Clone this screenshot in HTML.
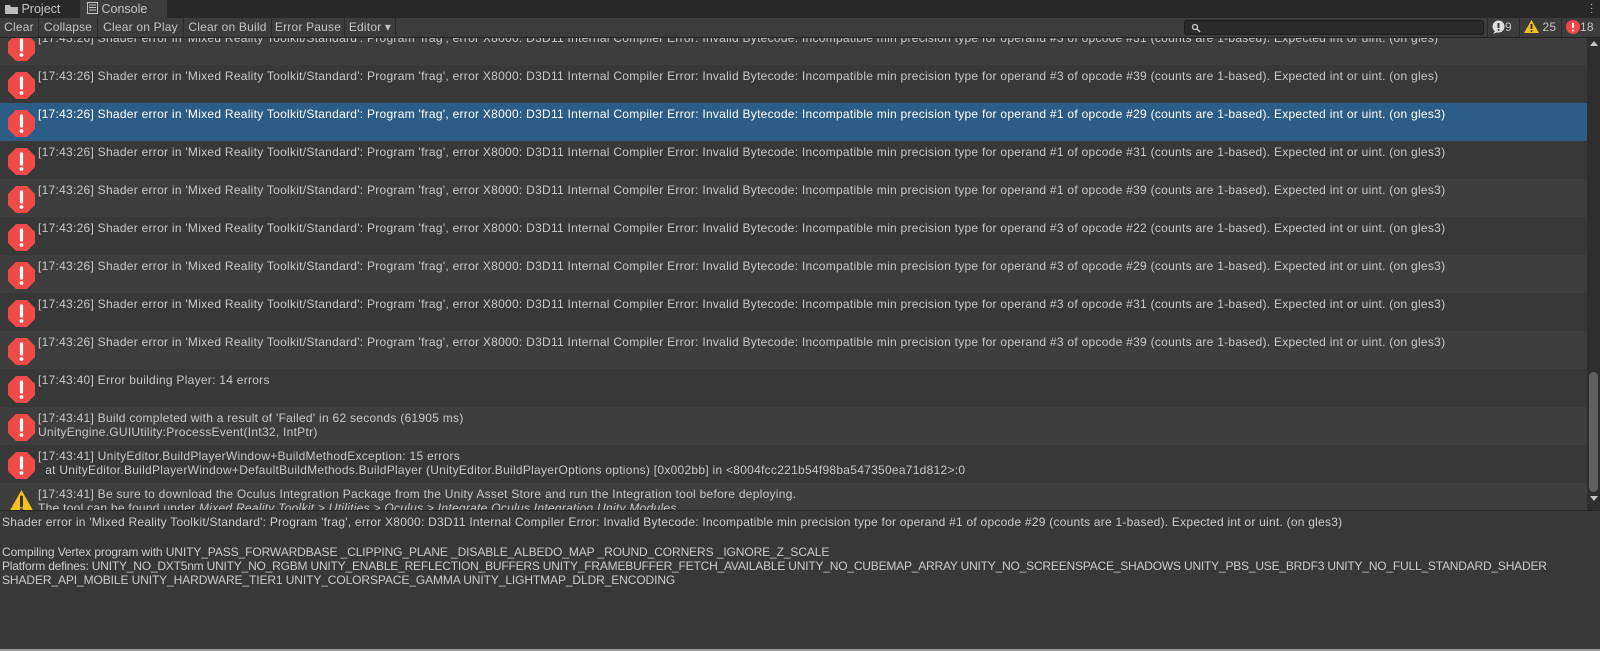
<!DOCTYPE html>
<html><head><meta charset="utf-8"><style>
*{margin:0;padding:0;box-sizing:border-box}
body{width:1600px;height:651px;background:#383838;font-family:"Liberation Sans",sans-serif;font-size:12px;color:#c8c8c8;overflow:hidden;position:relative}
.tabs{position:absolute;left:0;top:0;width:1600px;height:18px;background:#282828}
.tab{position:absolute;top:0;height:18px;line-height:18px;font-size:12.5px;color:#c4c4c4}
.tb{position:absolute;left:0;top:18px;width:1600px;height:20px;background:#3c3c3c;border-bottom:1px solid #232323;z-index:3}
.btn{position:absolute;top:0;height:19px;line-height:19px;font-size:12px;color:#c4c4c4;border-right:1px solid #2a2a2a;text-align:center;letter-spacing:0.2px;white-space:nowrap}
.list{position:absolute;left:0;top:38px;width:1600px;height:472px;overflow:hidden}
.row{position:absolute;left:0;width:1587px;height:38px;background:#3e3e3e}
.row.o{background:#383838}
.row.s{background:#2c5d87}
.row.s .t{color:#fff}
.row .t{position:absolute;left:38px;top:4px;line-height:14px;white-space:pre;font-size:12px;letter-spacing:0.27px;color:#c8c8c8}
.ic{position:absolute;left:8px;top:7px}
.sb{position:absolute;left:1587px;top:38px;width:13px;height:472px;background:#2e2e2e}
.det{position:absolute;left:0;top:510px;width:1600px;height:139px;background:#383838;border-top:1px solid #262626}
.det div{position:absolute;left:2px;white-space:pre;line-height:14px;font-size:12px;color:#cccccc}
</style></head><body>
<svg width="0" height="0" style="position:absolute"><defs>
<g id="err"><path d="M8 0h11l8 8v11l-8 8H8l-8-8V8z" fill="#f04a48"/><path d="M13.5 6v10" stroke="#fff" stroke-width="3.2" stroke-linecap="round"/><circle cx="13.5" cy="21" r="1.9" fill="#fff"/></g>
</defs></svg>
<div class="tabs">
 <div class="tab" style="left:0;width:80px;padding-left:5px"><svg width="13" height="10" style="vertical-align:-1px"><path d="M0 1h5l1 2h7v7H0z" fill="#bdbdbd"/></svg> Project</div>
 <div class="tab" style="left:80px;width:87px;background:#3c3c3c;padding-left:7px"><svg width="11" height="12" style="vertical-align:-1px"><rect x="0.5" y="0.5" width="10" height="11" fill="none" stroke="#c4c4c4"/><path d="M2 3h7M2 5.5h7M2 8h7" stroke="#c4c4c4"/></svg> Console</div>
 <div style="position:absolute;left:1590px;top:3px;width:3px;color:#ccc;font-size:10px;line-height:4px">·<br>·<br>·</div>
</div>
<div class="tb">
 <div class="btn" style="left:0;width:39px">Clear</div>
 <div class="btn" style="left:39px;width:59px">Collapse</div>
 <div class="btn" style="left:98px;width:86px">Clear on Play</div>
 <div class="btn" style="left:184px;width:88px">Clear on Build</div>
 <div class="btn" style="left:272px;width:73px">Error Pause</div>
 <div class="btn" style="left:345px;width:51px">Editor ▾</div>
 <div style="position:absolute;left:1184px;top:2px;width:300px;height:15px;background:#2a2a2a;border:1px solid #1e1e1e;border-radius:3px"><svg width="10" height="10" style="position:absolute;left:6px;top:2px"><circle cx="4" cy="4" r="2.5" fill="none" stroke="#ccc" stroke-width="1.3"/><path d="M6 6l3 3" stroke="#ccc" stroke-width="1.5"/></svg></div>
 <div class="btn" style="left:1487px;width:33px;border-left:1px solid #2a2a2a;text-align:left;padding-left:4px"><svg width="13" height="14" style="vertical-align:-3px"><path d="M6.5 0.5a6 6 0 1 0 0.1 0zM3 11l-2 3 5-2z" fill="#e0e0e0"/><path d="M6.5 3v5" stroke="#333" stroke-width="2"/><circle cx="6.5" cy="10" r="1" fill="#333"/></svg>9</div>
 <div class="btn" style="left:1520px;width:42px;text-align:left;padding-left:4px"><svg width="15" height="13" style="vertical-align:-2px"><path d="M7.5 0L15 13H0z" fill="#f0c020"/><path d="M7.5 4v5" stroke="#333" stroke-width="2"/><circle cx="7.5" cy="11" r="1" fill="#333"/></svg> 25</div>
 <div class="btn" style="left:1562px;width:38px;text-align:left;padding-left:4px;border-right:0"><svg width="14" height="14" style="vertical-align:-3px"><circle cx="7" cy="7" r="7" fill="#f04848"/><path d="M7 3v5" stroke="#fff" stroke-width="2"/><circle cx="7" cy="10.5" r="1" fill="#fff"/></svg>18</div>
</div>
<div class="list">
<div class="row" style="top:-11px"><svg class="ic" width="27" height="27"><use href="#err"/></svg><div class="t">[17:43:26] Shader error in 'Mixed Reality Toolkit/Standard': Program 'frag', error X8000: D3D11 Internal Compiler Error: Invalid Bytecode: Incompatible min precision type for operand #3 of opcode #31 (counts are 1-based). Expected int or uint. (on gles)</div></div>
<div class="row o" style="top:27px"><svg class="ic" width="27" height="27"><use href="#err"/></svg><div class="t">[17:43:26] Shader error in 'Mixed Reality Toolkit/Standard': Program 'frag', error X8000: D3D11 Internal Compiler Error: Invalid Bytecode: Incompatible min precision type for operand #3 of opcode #39 (counts are 1-based). Expected int or uint. (on gles)</div></div>
<div class="row s" style="top:65px"><svg class="ic" width="27" height="27"><use href="#err"/></svg><div class="t">[17:43:26] Shader error in 'Mixed Reality Toolkit/Standard': Program 'frag', error X8000: D3D11 Internal Compiler Error: Invalid Bytecode: Incompatible min precision type for operand #1 of opcode #29 (counts are 1-based). Expected int or uint. (on gles3)</div></div>
<div class="row o" style="top:103px"><svg class="ic" width="27" height="27"><use href="#err"/></svg><div class="t">[17:43:26] Shader error in 'Mixed Reality Toolkit/Standard': Program 'frag', error X8000: D3D11 Internal Compiler Error: Invalid Bytecode: Incompatible min precision type for operand #1 of opcode #31 (counts are 1-based). Expected int or uint. (on gles3)</div></div>
<div class="row" style="top:141px"><svg class="ic" width="27" height="27"><use href="#err"/></svg><div class="t">[17:43:26] Shader error in 'Mixed Reality Toolkit/Standard': Program 'frag', error X8000: D3D11 Internal Compiler Error: Invalid Bytecode: Incompatible min precision type for operand #1 of opcode #39 (counts are 1-based). Expected int or uint. (on gles3)</div></div>
<div class="row o" style="top:179px"><svg class="ic" width="27" height="27"><use href="#err"/></svg><div class="t">[17:43:26] Shader error in 'Mixed Reality Toolkit/Standard': Program 'frag', error X8000: D3D11 Internal Compiler Error: Invalid Bytecode: Incompatible min precision type for operand #3 of opcode #22 (counts are 1-based). Expected int or uint. (on gles3)</div></div>
<div class="row" style="top:217px"><svg class="ic" width="27" height="27"><use href="#err"/></svg><div class="t">[17:43:26] Shader error in 'Mixed Reality Toolkit/Standard': Program 'frag', error X8000: D3D11 Internal Compiler Error: Invalid Bytecode: Incompatible min precision type for operand #3 of opcode #29 (counts are 1-based). Expected int or uint. (on gles3)</div></div>
<div class="row o" style="top:255px"><svg class="ic" width="27" height="27"><use href="#err"/></svg><div class="t">[17:43:26] Shader error in 'Mixed Reality Toolkit/Standard': Program 'frag', error X8000: D3D11 Internal Compiler Error: Invalid Bytecode: Incompatible min precision type for operand #3 of opcode #31 (counts are 1-based). Expected int or uint. (on gles3)</div></div>
<div class="row" style="top:293px"><svg class="ic" width="27" height="27"><use href="#err"/></svg><div class="t">[17:43:26] Shader error in 'Mixed Reality Toolkit/Standard': Program 'frag', error X8000: D3D11 Internal Compiler Error: Invalid Bytecode: Incompatible min precision type for operand #3 of opcode #39 (counts are 1-based). Expected int or uint. (on gles3)</div></div>
<div class="row o" style="top:331px"><svg class="ic" width="27" height="27"><use href="#err"/></svg><div class="t">[17:43:40] Error building Player: 14 errors</div></div>
<div class="row" style="top:369px"><svg class="ic" width="27" height="27"><use href="#err"/></svg><div class="t">[17:43:41] Build completed with a result of 'Failed' in 62 seconds (61905 ms)
UnityEngine.GUIUtility:ProcessEvent(Int32, IntPtr)</div></div>
<div class="row o" style="top:407px"><svg class="ic" width="27" height="27"><use href="#err"/></svg><div class="t">[17:43:41] UnityEditor.BuildPlayerWindow+BuildMethodException: 15 errors
  at UnityEditor.BuildPlayerWindow+DefaultBuildMethods.BuildPlayer (UnityEditor.BuildPlayerOptions options) [0x002bb] in &lt;8004fcc221b54f98ba547350ea71d812&gt;:0</div></div>
<div class="row" style="top:445px"><svg class="ic" width="27" height="26" style="top:6px"><path d="M13.5 1L27 25H0z" fill="#f4c21a"/><path d="M13.5 8v9" stroke="#333" stroke-width="3" stroke-linecap="round"/><circle cx="13.5" cy="21" r="1.7" fill="#333"/></svg><div class="t">[17:43:41] Be sure to download the Oculus Integration Package from the Unity Asset Store and run the Integration tool before deploying.
The tool can be found under <i>Mixed Reality Toolkit &gt; Utilities &gt; Oculus &gt; Integrate Oculus Integration Unity Modules</i>.</div></div>
</div>
<div class="sb">
 <div style="position:absolute;left:3px;top:3px;width:0;height:0;border-left:4px solid transparent;border-right:4px solid transparent;border-bottom:5px solid #c8c8c8"></div>
 <div style="position:absolute;left:2px;top:334px;width:9px;height:120px;background:#5f5f5f;border-radius:5px"></div>
 <div style="position:absolute;left:3px;top:458px;width:0;height:0;border-left:4px solid transparent;border-right:4px solid transparent;border-top:5px solid #c8c8c8"></div>
</div>
<div class="det">
 <div style="top:4px;letter-spacing:0.24px">Shader error in 'Mixed Reality Toolkit/Standard': Program 'frag', error X8000: D3D11 Internal Compiler Error: Invalid Bytecode: Incompatible min precision type for operand #1 of opcode #29 (counts are 1-based). Expected int or uint. (on gles3)</div>
 <div style="top:34px;letter-spacing:-0.1px">Compiling Vertex program with UNITY_PASS_FORWARDBASE _CLIPPING_PLANE _DISABLE_ALBEDO_MAP _ROUND_CORNERS _IGNORE_Z_SCALE</div>
 <div style="top:48px;letter-spacing:-0.2px">Platform defines: UNITY_NO_DXT5nm UNITY_NO_RGBM UNITY_ENABLE_REFLECTION_BUFFERS UNITY_FRAMEBUFFER_FETCH_AVAILABLE UNITY_NO_CUBEMAP_ARRAY UNITY_NO_SCREENSPACE_SHADOWS UNITY_PBS_USE_BRDF3 UNITY_NO_FULL_STANDARD_SHADER</div>
 <div style="top:62px;letter-spacing:-0.1px">SHADER_API_MOBILE UNITY_HARDWARE_TIER1 UNITY_COLORSPACE_GAMMA UNITY_LIGHTMAP_DLDR_ENCODING</div>
</div>
<div style="position:absolute;left:0;top:649px;width:1600px;height:2px;background:#9a9a9a"></div>
</body></html>
